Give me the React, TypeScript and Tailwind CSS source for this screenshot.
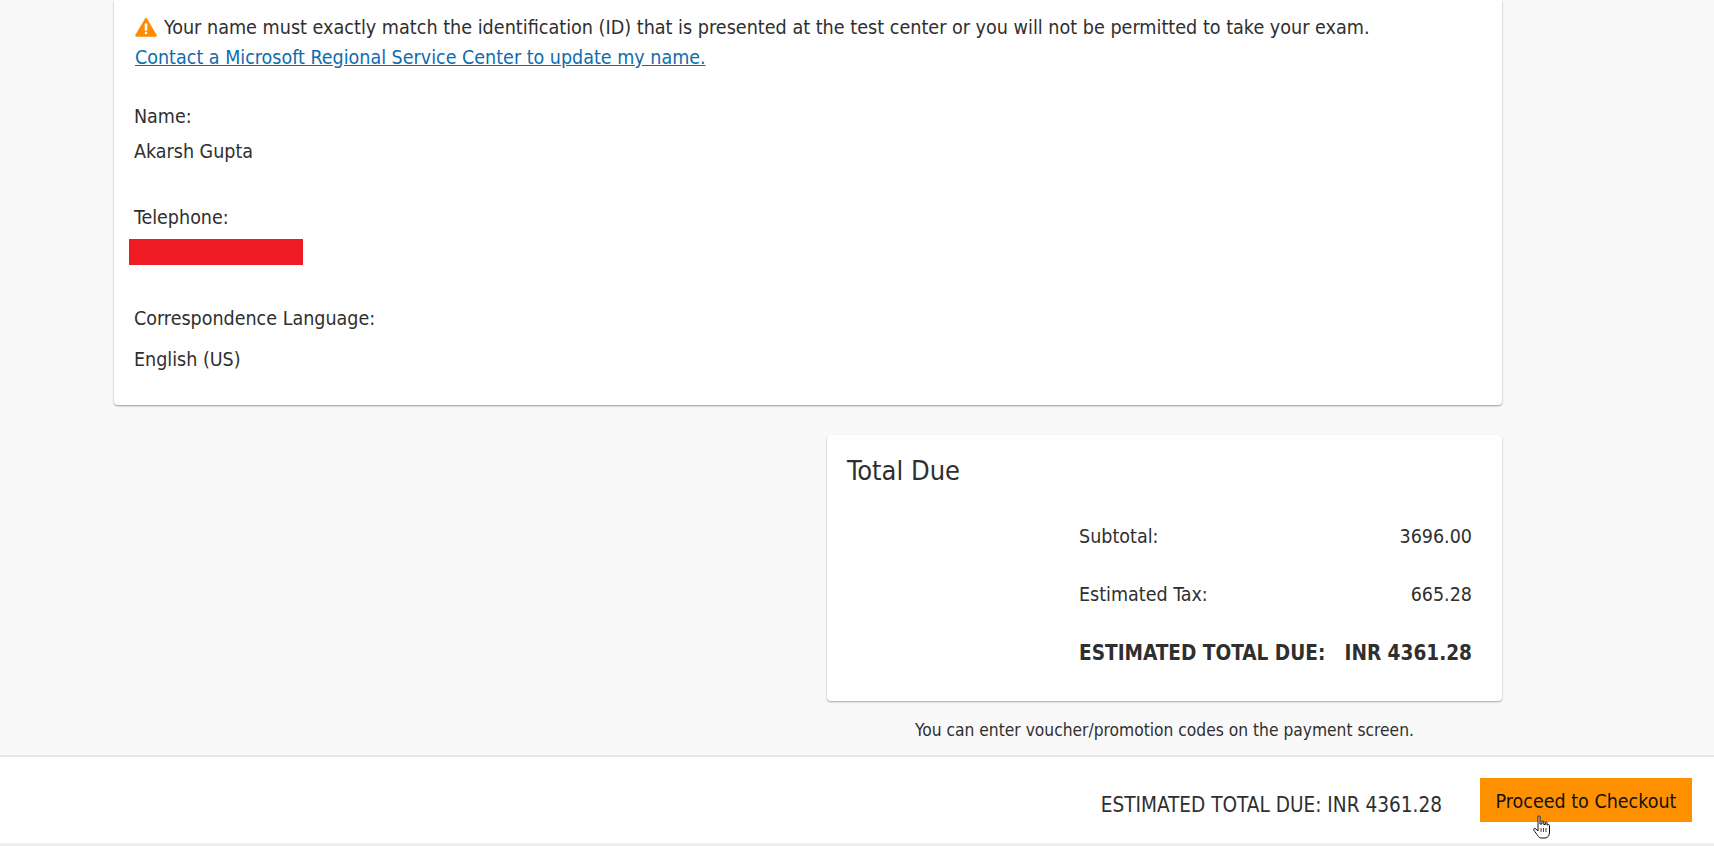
const font = "font-['DejaVu_Sans_Condensed','Noto_Sans',sans-serif]";

function WarningIcon() {
  return (
    <svg viewBox="0 0 24 22" className="ml-[1px] mr-[7px] inline-block h-[20px] w-[22px] align-[-3px]">
      <path d="M12 1.5 L23 20 Q23.4 21 22.2 21 L1.8 21 Q0.6 21 1 20 Z" fill="#ff8c00" stroke="#ff8c00" strokeWidth="1.5" strokeLinejoin="round" />
      <rect x="10.6" y="7" width="2.8" height="8" rx="1" fill="#fff" />
      <rect x="10.6" y="16.2" width="2.8" height="2.8" rx="1" fill="#fff" />
    </svg>
  );
}

function HandCursor() {
  return (
    <svg viewBox="0 0 17 24" className="absolute left-[53px] top-[37px] h-[24px] w-[17px]">
      <path
        d="M5 1.5 C5 0.7 7 0.7 7 1.5 L7 9 L9 9 L9 6.5 C9 5.8 10.8 5.8 10.8 6.5 L10.8 9.5 L12.4 9.5 L12.4 7.5 C12.4 6.8 14 6.8 14 7.5 L14 10 L15.2 10 C15.6 9 16.5 9.5 16.5 10.5 L16.5 17 C16.5 20 15 23 12 23 L8 23 C5.5 23 4 19 1 15.5 C0 14 1.5 13 3 14 L5 16 Z"
        fill="#fff"
        stroke="#111"
        strokeWidth="1"
        strokeLinejoin="round"
      />
      <path d="M8 17 L8 13 M10.5 17 L10.5 13 M13 17 L13 13" stroke="#111" strokeWidth="0.8" />
    </svg>
  );
}

function Row({ label, value, bold }: { label: string; value: string; bold?: boolean }) {
  return (
    <div className={`flex h-[58px] items-center justify-between ${bold ? "text-[20.6px] font-bold" : ""}`}>
      <span>{label}</span>
      <span>{value}</span>
    </div>
  );
}

export default function App() {
  return (
    <div className={`${font} flex h-[846px] w-[1714px] flex-col overflow-hidden bg-[#f9f9f9] text-[19.5px] text-[#2f2f2f]`}>
      <main className="flex flex-1 flex-col pl-[114px] pr-[212px]">
        <section className="h-[405px] rounded-b-[4px] bg-white pl-[20px] pt-[13px] shadow-[0_1px_2px_rgba(0,0,0,0.4)]">
          <p className="h-[30px] text-[19.6px] leading-[29px]">
            <WarningIcon />
            Your name must exactly match the identification (ID) that is presented at the test center or you will not be permitted to take your exam.
          </p>
          <a href="#" className="block h-[30px] pl-[1px] leading-[30px] text-[#0f6cae] underline">
            Contact a Microsoft Regional Service Center to update my name.
          </a>
          <p className="mt-[29px] leading-[30px]">Name:</p>
          <p className="mt-[5px] leading-[30px]">Akarsh Gupta</p>
          <p className="mt-[36px] leading-[30px]">Telephone:</p>
          <div className="-ml-[5px] mt-[6px] h-[26px] w-[174px] bg-[#ef1c25]" />
          <p className="mt-[39px] leading-[30px]">Correspondence Language:</p>
          <p className="mt-[11px] leading-[30px]">English (US)</p>
        </section>

        <section className="ml-auto mt-[30px] h-[266px] w-[675px] rounded-[4px] bg-white pl-[20px] pr-[30px] pt-[18px] shadow-[0_1px_2px_rgba(0,0,0,0.35)]">
          <h2 className="text-[27px] leading-[36px]">Total Due</h2>
          <div className="ml-[232px] mt-[19px] flex flex-col">
            <Row label="Subtotal:" value="3696.00" />
            <Row label="Estimated Tax:" value="665.28" />
            <Row label="ESTIMATED TOTAL DUE:" value="INR 4361.28" bold />
          </div>
        </section>

        <p className="ml-auto mt-[17px] w-[675px] text-center text-[17.25px] leading-[24px]">
          You can enter voucher/promotion codes on the payment screen.
        </p>
      </main>

      <footer className="flex h-[88px] items-center justify-end border-t-2 border-[#e8e8e8] bg-white pr-[22px]">
        <span className="mr-[38px] mt-[10px] text-[20.6px]">ESTIMATED TOTAL DUE: INR 4361.28</span>
        <div className="relative">
          <button className="h-[44px] w-[212px] bg-[#ff9100] pt-[3px] text-[19.5px] text-[#111]">Proceed to Checkout</button>
          <HandCursor />
        </div>
      </footer>
      <div className="h-[3px] bg-[#eeeeee]" />
    </div>
  );
}
